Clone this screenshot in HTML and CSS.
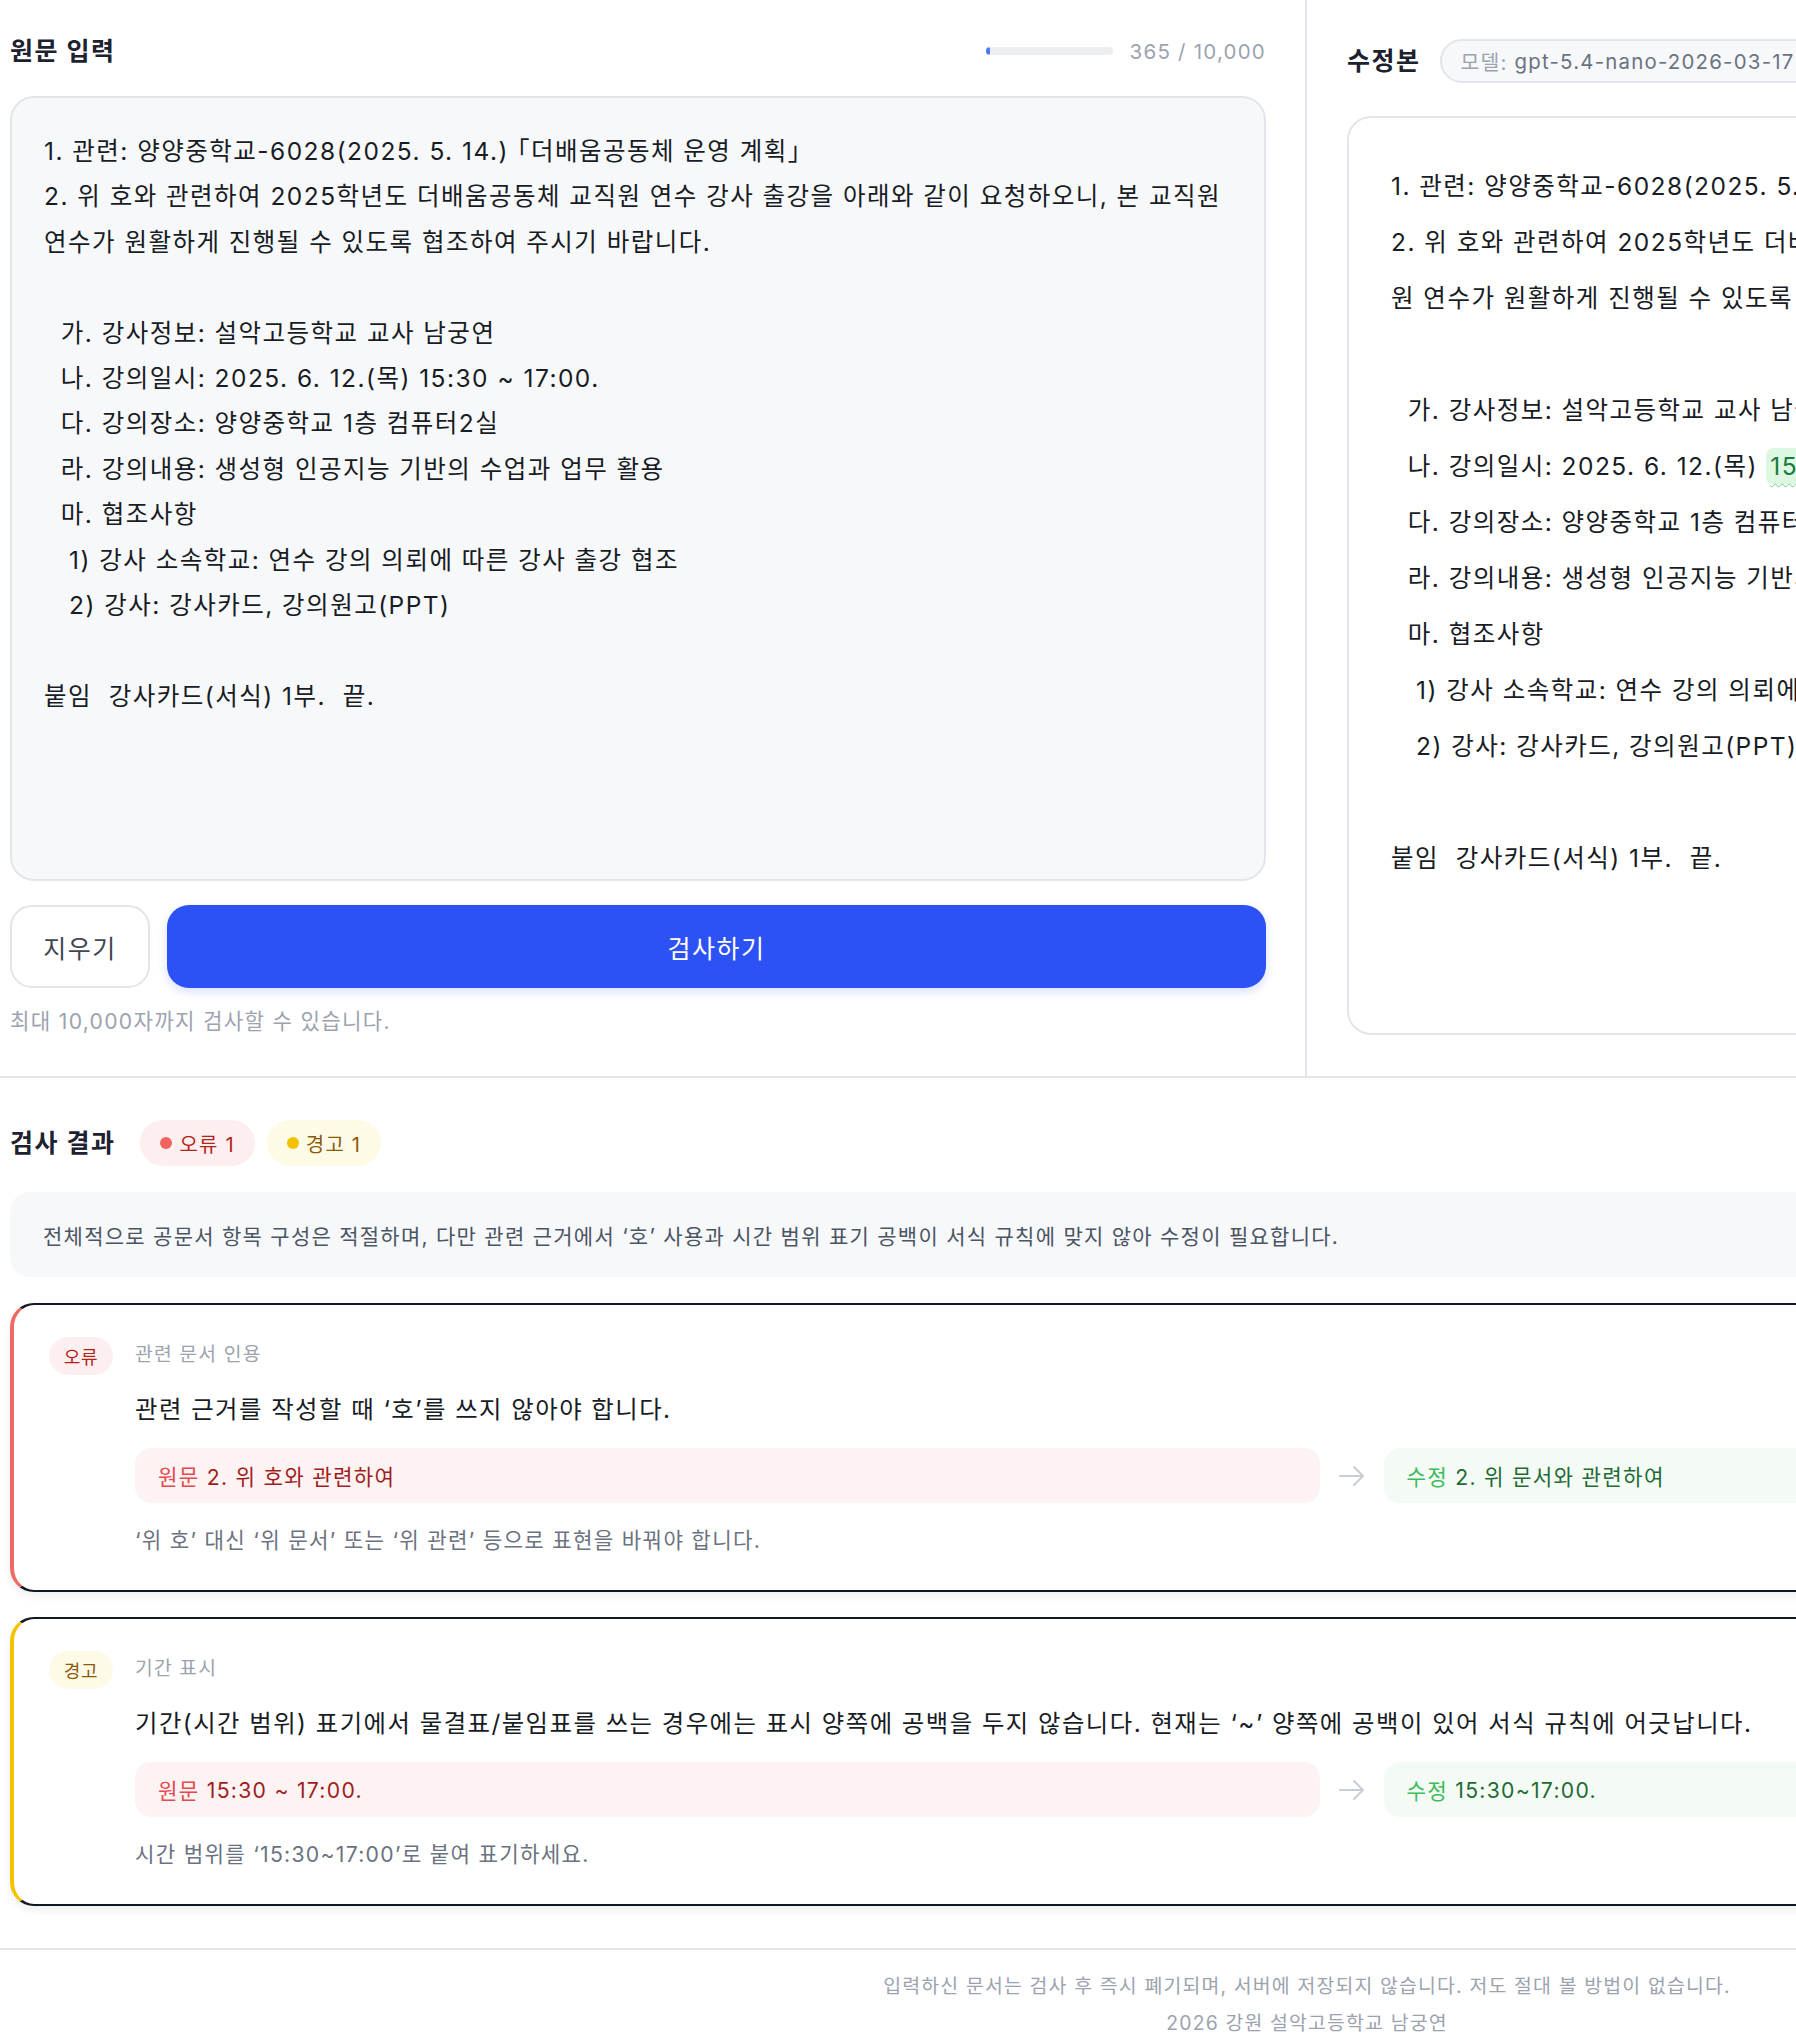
FILE: index.html
```html
<!DOCTYPE html>
<html lang="ko">
<head>
<meta charset="utf-8">
<title>공문서 서식 검사</title>
<link rel="stylesheet" href="styles.css">
</head>
<body>
<div class="page">
  <section class="top">
    <div class="col col-input">
      <div class="panel-head">
        <h2 class="panel-title">원문 입력</h2>
        <div class="counter">
          <div class="meter"><div class="meter-fill" style="width:3.65%"></div></div>
          <span class="count">365 / 10,000</span>
        </div>
      </div>
      <div class="editor">1. 관련: 양양중학교-6028(2025. 5. 14.) <span class="doc-name">「더배움공동체 운영 계획」</span>
2. 위 호와 관련하여 2025학년도 더배움공동체 교직원 연수 강사 출강을 아래와 같이 요청하오니, 본 교직원 연수가 원활하게 진행될 수 있도록 협조하여 주시기 바랍니다.

  가. 강사정보: 설악고등학교 교사 남궁연
  나. 강의일시: 2025. 6. 12.(목) 15:30 ~ 17:00.
  다. 강의장소: 양양중학교 1층 컴퓨터2실
  라. 강의내용: 생성형 인공지능 기반의 수업과 업무 활용
  마. 협조사항
   1) 강사 소속학교: 연수 강의 의뢰에 따른 강사 출강 협조
   2) 강사: 강사카드, 강의원고(PPT)

붙임  강사카드(서식) 1부.  끝.</div>
      <div class="actions">
        <button class="btn btn-clear" type="button">지우기</button>
        <button class="btn btn-check" type="button">검사하기</button>
      </div>
      <p class="hint">최대 10,000자까지 검사할 수 있습니다.</p>
    </div>
    <div class="col col-output">
      <div class="panel-head panel-head-start">
        <h2 class="panel-title">수정본</h2>
        <span class="model-pill"><span class="model-key">모델:</span> gpt-5.4-nano-2026-03-17</span>
      </div>
      <div class="output">1. 관련: 양양중학교-6028(2025. 5. 14.) <span class="doc-name">「더배움공동체 운영 계획」</span>
2. 위 호와 관련하여 2025학년도 더배움공동체 교직원 연수 강사 출강을 아래와 같이 요청하오니, 본 교직원 연수가 원활하게 진행될 수 있도록 협조하여 주시기 바랍니다.

  가. 강사정보: 설악고등학교 교사 남궁연
  나. 강의일시: 2025. 6. 12.(목) <span class="fix-mark">15:30~17:00.</span>
  다. 강의장소: 양양중학교 1층 컴퓨터2실
  라. 강의내용: 생성형 인공지능 기반의 수업과 업무 활용
  마. 협조사항
   1) 강사 소속학교: 연수 강의 의뢰에 따른 강사 출강 협조
   2) 강사: 강사카드, 강의원고(PPT)

붙임  강사카드(서식) 1부.  끝.</div>
    </div>
  </section>

  <section class="results">
    <div class="results-head">
      <h2 class="panel-title">검사 결과</h2>
      <span class="count-badge count-error"><span class="dot"></span>오류 1</span>
      <span class="count-badge count-warn"><span class="dot"></span>경고 1</span>
    </div>
    <div class="summary">전체적으로 공문서 항목 구성은 적절하며, 다만 관련 근거에서 ‘호’ 사용과 시간 범위 표기 공백이 서식 규칙에 맞지 않아 수정이 필요합니다.</div>

    <div class="issues">
      <article class="issue issue-error">
        <span class="tag tag-error">오류</span>
        <div class="issue-body">
          <div class="issue-cat">관련 문서 인용</div>
          <p class="issue-msg">관련 근거를 작성할 때 ‘호’를 쓰지 않아야 합니다.</p>
          <div class="diff">
            <div class="diff-box diff-old"><span class="diff-label">원문</span> 2. 위 호와 관련하여</div>
            <svg class="diff-arrow" viewBox="0 0 28 24" aria-hidden="true"><path d="M2 12h23M16 3l9 9-9 9"/></svg>
            <div class="diff-box diff-new"><span class="diff-label">수정</span> 2. 위 문서와 관련하여</div>
          </div>
          <p class="issue-note">‘위 호’ 대신 ‘위 문서’ 또는 ‘위 관련’ 등으로 표현을 바꿔야 합니다.</p>
        </div>
      </article>

      <article class="issue issue-warn">
        <span class="tag tag-warn">경고</span>
        <div class="issue-body">
          <div class="issue-cat">기간 표시</div>
          <p class="issue-msg">기간(시간 범위) 표기에서 물결표/붙임표를 쓰는 경우에는 표시 양쪽에 공백을 두지 않습니다. 현재는 ‘~’ 양쪽에 공백이 있어 서식 규칙에 어긋납니다.</p>
          <div class="diff">
            <div class="diff-box diff-old"><span class="diff-label">원문</span> 15:30 ~ 17:00.</div>
            <svg class="diff-arrow" viewBox="0 0 28 24" aria-hidden="true"><path d="M2 12h23M16 3l9 9-9 9"/></svg>
            <div class="diff-box diff-new"><span class="diff-label">수정</span> 15:30~17:00.</div>
          </div>
          <p class="issue-note">시간 범위를 ‘15:30~17:00’로 붙여 표기하세요.</p>
        </div>
      </article>
    </div>
  </section>

  <footer class="footer">
    <p>입력하신 문서는 검사 후 즉시 폐기되며, 서버에 저장되지 않습니다. 저도 절대 볼 방법이 없습니다.</p>
    <p>2026 강원 설악고등학교 남궁연</p>
  </footer>
</div>
</body>
</html>
```

FILE: styles.css
```css
html, body {
  margin: 0;
  padding: 0;
  background: #ffffff;
  overflow-x: hidden;
}

body {
  font-family: "Inter", "Noto Sans CJK KR", sans-serif;
  color: #1f2937;
}

.page {
  width: 2614px;
}

/* ---------- top: input / output ---------- */
.top {
  display: grid;
  grid-template-columns: 1307px 1307px;
  border-bottom: 2px solid #e4e5ea;
}

.col-input {
  padding: 34px 39px 43px 10px;
  border-right: 2px solid #e4e5ea;
}

.col-output {
  padding: 39px 10px 41px 40px;
}

.panel-head {
  display: flex;
  align-items: center;
  justify-content: space-between;
  height: 34px;
  margin-bottom: 28px;
}

.panel-head-start {
  justify-content: flex-start;
  gap: 19px;
  height: 44px;
  margin-bottom: 33px;
}

.panel-title {
  margin: 0;
  font-size: 25px;
  line-height: 34px;
  font-weight: 700;
  letter-spacing: 0.06em;
  color: #1c2230;
}

.counter {
  display: flex;
  align-items: center;
  gap: 17px;
}

.meter {
  width: 127px;
  height: 8px;
  border-radius: 4px;
  background: #eceef2;
  overflow: hidden;
}

.meter-fill {
  height: 100%;
  background: #4a78ff;
  border-radius: 4px;
}

.count {
  font-size: 20.5px;
  letter-spacing: 0.06em;
  color: #9ca3af;
}

.editor {
  box-sizing: border-box;
  height: 785px;
  padding: 31px 32px;
  border: 2px solid #e4e5ea;
  border-radius: 24px;
  background: #f7f8fa;
  font-size: 24.5px;
  line-height: 45.4px;
  letter-spacing: 0.06em;
  white-space: pre-wrap;
  color: #181c24;
}

.doc-name {
  font-feature-settings: "halt";
}

.actions {
  display: flex;
  gap: 17px;
  margin-top: 24px;
  height: 83px;
}

.btn {
  font-family: inherit;
  font-size: 25px;
  letter-spacing: 0.06em;
  border-radius: 22px;
  cursor: pointer;
}

.btn-clear {
  width: 140px;
  border: 2px solid #e4e5ea;
  background: #ffffff;
  color: #3f4652;
}

.btn-check {
  flex: 1;
  border: none;
  background: #2c51f4;
  color: #ffffff;
  box-shadow: 0 4px 10px rgba(44, 81, 244, 0.18);
}

.hint {
  margin: 21px 0 0;
  font-size: 21.2px;
  line-height: 24px;
  letter-spacing: 0.06em;
  color: #9ca3af;
}

.model-pill {
  box-sizing: border-box;
  height: 44px;
  display: inline-flex;
  align-items: center;
  padding: 0 19px;
  border: 2px solid #e4e5ea;
  border-radius: 22px;
  background: #f7f8fa;
  font-size: 20.4px;
  letter-spacing: 0.06em;
  color: #6b7280;
  white-space: pre;
}

.model-key {
  color: #9ca3af;
}

.output {
  box-sizing: border-box;
  height: 919px;
  padding: 40px 42px;
  border: 2px solid #e4e5ea;
  border-radius: 24px;
  background: #ffffff;
  font-size: 24.5px;
  line-height: 56px;
  letter-spacing: 0.06em;
  white-space: pre-wrap;
  color: #181c24;
}

.fix-mark {
  background: #dcf7e2;
  color: #1c7a3a;
  border-radius: 7px;
  padding: 3px 4px;
  text-decoration: underline wavy #63d17f;
  text-decoration-thickness: 1px;
  text-underline-offset: 8px;
}

/* ---------- results ---------- */
.results {
  padding: 42px 10px 42px 10px;
}

.results-head {
  display: flex;
  align-items: center;
  height: 46px;
}

.results-head .panel-title {
  margin-right: 25px;
}

.count-badge {
  display: inline-flex;
  align-items: center;
  gap: 7px;
  height: 46px;
  padding: 0 20px;
  border-radius: 23px;
  font-size: 20px;
  letter-spacing: 0.06em;
  margin-right: 12px;
}

.count-badge .dot {
  width: 12px;
  height: 12px;
  border-radius: 50%;
}

.count-error {
  background: #fdefef;
  color: #b42318;
}

.count-error .dot {
  background: #ef6461;
}

.count-warn {
  background: #fdfbe6;
  color: #8a5a06;
}

.count-warn .dot {
  background: #f2c200;
}

.summary {
  margin-top: 26px;
  height: 85px;
  display: flex;
  align-items: center;
  padding: 0 33px;
  border-radius: 20px;
  background: #f7f8fa;
  font-size: 21px;
  letter-spacing: 0.06em;
  color: #4b5563;
}

.issues {
  display: flex;
  flex-direction: column;
  gap: 25px;
  margin-top: 26px;
}

.issue {
  display: grid;
  grid-template-columns: 64px 1fr;
  column-gap: 22px;
  align-items: start;
  padding: 32px 34px 36px 35px;
  border: 2px solid #131722;
  border-left-width: 4px;
  border-radius: 24px;
  background: #ffffff;
  box-shadow: 0 4px 8px rgba(17, 24, 39, 0.07);
}

.issue-error {
  border-left-color: #ee6a64;
}

.issue-warn {
  border-left-color: #f3c300;
}

.tag {
  height: 38px;
  display: flex;
  align-items: center;
  justify-content: center;
  border-radius: 19px;
  font-size: 18px;
  letter-spacing: 0.04em;
}

.tag-error {
  background: #fdefef;
  color: #b42318;
}

.tag-warn {
  background: #fdfbe6;
  color: #8a5a06;
}

.issue-cat {
  height: 32px;
  display: flex;
  align-items: center;
  font-size: 19.3px;
  letter-spacing: 0.06em;
  color: #9ca3af;
}

.issue-msg {
  margin: 22px 0 0;
  font-size: 24.4px;
  line-height: 36px;
  letter-spacing: 0.06em;
  color: #181c24;
}

.diff {
  display: grid;
  grid-template-columns: 1fr 28px 1fr;
  column-gap: 18px;
  align-items: center;
  margin-top: 21px;
}

.diff-box {
  height: 55px;
  display: flex;
  align-items: center;
  padding: 0 23px;
  border-radius: 16px;
  font-size: 21.2px;
  letter-spacing: 0.06em;
  white-space: pre;
}

.diff-old {
  background: #fdf3f3;
  color: #a11d1d;
}

.diff-old .diff-label {
  color: #e5484d;
}

.diff-new {
  background: #f3fbf4;
  color: #1f6a35;
}

.diff-new .diff-label {
  color: #3dbb5e;
}

.diff-arrow {
  width: 28px;
  height: 24px;
  fill: none;
  stroke: #c9cdd6;
  stroke-width: 2;
  stroke-linecap: round;
  stroke-linejoin: round;
}

.issue-note {
  margin: 23px 0 0;
  font-size: 21.2px;
  line-height: 28px;
  letter-spacing: 0.06em;
  color: #6b7280;
}

/* ---------- footer ---------- */
.footer {
  border-top: 2px solid #e4e5ea;
  padding: 18px 0 20px;
  text-align: center;
  font-size: 19.4px;
  line-height: 37px;
  letter-spacing: 0.06em;
  color: #9ca3af;
}

.footer p {
  margin: 0;
}
```
